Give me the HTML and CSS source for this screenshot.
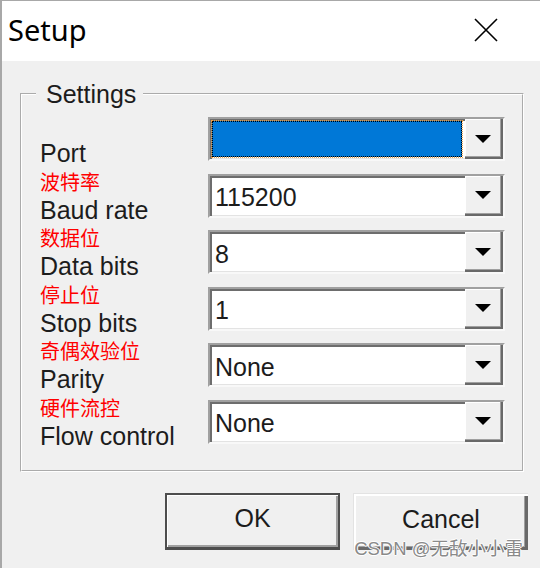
FILE: index.html
```html
<!DOCTYPE html>
<html>
<head>
<meta charset="utf-8">
<title>Setup</title>
<link rel="stylesheet" href="styles.css">
</head>
<body>
<div class="window">
  <div class="titlebar">
    <span class="title">Setup</span>
    <svg class="close" width="24" height="24" viewBox="0 0 24 24"><path d="M1 1 L23 23 M23 1 L1 23" stroke="#000" stroke-width="1.6" fill="none"/></svg>
  </div>
  <div class="body">
    <fieldset class="group">
      <legend class="legend">Settings</legend>
      <div class="grid">
        <div class="label"><span class="en">Port</span></div>
        <div class="combo"><div class="value"><div class="selected"></div></div><div class="drop"><span class="arrow"></span></div></div>

        <div class="label"><span class="cn">波特率</span><span class="en">Baud rate</span></div>
        <div class="combo"><div class="value">115200</div><div class="drop"><span class="arrow"></span></div></div>

        <div class="label"><span class="cn">数据位</span><span class="en">Data bits</span></div>
        <div class="combo"><div class="value">8</div><div class="drop"><span class="arrow"></span></div></div>

        <div class="label"><span class="cn">停止位</span><span class="en">Stop bits</span></div>
        <div class="combo"><div class="value">1</div><div class="drop"><span class="arrow"></span></div></div>

        <div class="label"><span class="cn">奇偶效验位</span><span class="en">Parity</span></div>
        <div class="combo"><div class="value">None</div><div class="drop"><span class="arrow"></span></div></div>

        <div class="label"><span class="cn">硬件流控</span><span class="en">Flow control</span></div>
        <div class="combo"><div class="value">None</div><div class="drop"><span class="arrow"></span></div></div>
      </div>
    </fieldset>
    <div class="buttons">
      <button class="btn btn-default">OK</button>
      <button class="btn">Cancel</button>
    </div>
  </div>
  <div class="watermark">CSDN @无敌小小雷</div>
</div>
</body>
</html>
```
FILE: styles.css
```css
html, body {
  margin: 0;
  padding: 0;
  background: #f0f0f0;
}
.window {
  position: relative;
  width: 540px;
  height: 568px;
  box-sizing: border-box;
  border-left: 2px solid #a8a8a8;
  border-top: 1px solid #a8a8a8;
  background: #f0f0f0;
  overflow: hidden;
  font-family: "Liberation Sans", Arial, sans-serif;
  color: #1c1c1c;
}
.titlebar {
  height: 60px;
  box-sizing: border-box;
  background: #fff;
  display: flex;
  align-items: center;
  justify-content: space-between;
  padding: 0 42px 3px 6px;
}
.title {
  font-family: "Noto Sans", "Open Sans", sans-serif;
  font-size: 29px;
  color: #000;
}
.close {
  display: block;
  margin-top: 1px;
}
.body {
  display: flex;
  flex-direction: column;
}
.group {
  margin: 22px 16px 0 18px;
  padding: 0;
  min-width: 0;
  border: 2px groove #fff;
}
.legend {
  margin-left: 14px;
  padding: 0 7px 0 10px;
  font-size: 25px;
  line-height: 22px;
}
.grid {
  display: grid;
  grid-template-columns: 168px 297px;
  grid-auto-rows: 44px;
  row-gap: 12.6px;
  padding: 12px 0 26px 18px;
}
.label {
  display: flex;
  flex-direction: column;
  justify-content: flex-end;
}
.cn {
  font-family: "Noto Sans CJK SC", sans-serif;
  font-size: 20px;
  line-height: 20px;
  color: #ff0000;
  margin-bottom: 7px;
  white-space: nowrap;
}
.en {
  font-size: 25px;
  line-height: 22px;
  margin-bottom: -3px;
  white-space: nowrap;
}
.combo {
  display: flex;
  box-sizing: border-box;
  height: 44px;
  background: #fff;
  border: 2px solid;
  border-color: #a0a0a0 #f8f8f8 #f8f8f8 #a0a0a0;
  box-shadow: inset 2px 2px 0 #6d6d6d, inset -1px -1px 0 #e3e3e3;
}
.value {
  flex: 1;
  display: flex;
  align-items: center;
  padding: 4px 0 0 5px;
  font-size: 25px;
  min-width: 0;
}
.selected {
  align-self: stretch;
  flex: 1;
  margin: -2px 3px 2px -3px;
  background: #0078d7;
  border: 1px dotted #000;
  outline: 1px dotted #f0a040;
}
.drop {
  flex: none;
  width: 38px;
  background: #f0f0f0;
  box-shadow: inset -2px -2px 0 #696969, inset -3px -3px 0 #a0a0a0, inset 1px 1px 0 #fff;
  display: flex;
  align-items: center;
  justify-content: center;
  padding: 0 2px 1px 0;
  box-sizing: border-box;
}
.arrow {
  width: 0;
  height: 0;
  border-left: 8px solid transparent;
  border-right: 8px solid transparent;
  border-top: 8px solid #000;
}
.buttons {
  display: flex;
  justify-content: flex-end;
  gap: 13px;
  margin-top: 21px;
  padding-right: 12px;
}
.btn {
  width: 175px;
  height: 57px;
  box-sizing: border-box;
  font-family: "Liberation Sans", Arial, sans-serif;
  font-size: 25px;
  color: #1c1c1c;
  background: #f0f0f0;
  border: 1px solid #e3e3e3;
  border-right: none;
  border-bottom: none;
  box-shadow: inset 2px 2px 0 #fff, inset -3px -3px 0 #696969, inset -4px -4px 0 #a0a0a0;
  padding: 0 0 5px 0;
  margin: 0;
}
.btn-default {
  border: 2px solid #4d4d4d;
  border-bottom-width: 3px;
  box-shadow: inset 1px 1px 0 #fff, inset -2px -2px 0 #a0a0a0;
}
.watermark {
  position: absolute;
  right: 17px;
  bottom: 8px;
  font-family: "Liberation Sans", "Noto Sans CJK SC", sans-serif;
  font-size: 18.5px;
  line-height: 22px;
  color: #8a8a8a;
  text-shadow: 1px 0 0 #fff, -1px 0 0 #fff, 0 1px 0 #fff, 0 -1px 0 #fff;
  white-space: nowrap;
}
```
